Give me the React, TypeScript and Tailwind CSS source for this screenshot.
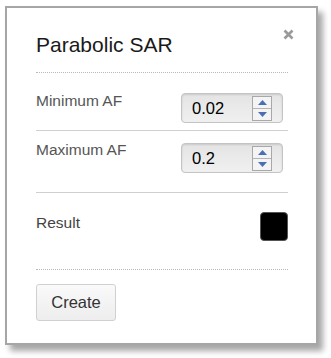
import React from "react";

function Spinner() {
  return (
    <div className="flex h-[25px] w-[20px] flex-col border border-[#a8a8a8] bg-[#f4f4f4]">
      <div className="flex flex-1 items-center justify-center border-b border-[#b5b5b5]">
        <svg width="9" height="5" viewBox="0 0 9 5">
          <path d="M0 5 L4.5 0 L9 5 Z" fill="#4a6fb5" />
        </svg>
      </div>
      <div className="flex flex-1 items-center justify-center">
        <svg width="9" height="5" viewBox="0 0 9 5">
          <path d="M0 0 L4.5 5 L9 0 Z" fill="#4a6fb5" />
        </svg>
      </div>
    </div>
  );
}

function NumberBox({ value }: { value: string }) {
  return (
    <div className="mr-[5px] flex h-[30px] w-[102px] items-center justify-between rounded-[4px] border border-[#c4c4c4] bg-gradient-to-b from-[#e4e4e4] to-[#f0f0f0] pl-[10px] pr-[10px] shadow-[inset_0_1px_2px_rgba(0,0,0,0.12)]">
      <span className="text-[16.5px] text-black">{value}</span>
      <Spinner />
    </div>
  );
}

export default function App() {
  return (
    <div className="h-[358px] w-[331px] bg-white font-['Liberation_Sans',Arial,sans-serif]">
      <div className="pl-[5px] pt-[6px]">
        <div className="relative h-[339px] w-[313px] border-2 border-[#a6a6a6] bg-white pl-[29px] pr-[28px] pt-[25px] shadow-[5px_6px_6px_rgba(0,0,0,0.35)]">
          <button
            type="button"
            className="absolute right-[22px] top-[20px] flex h-[12px] w-[12px] items-center justify-center"
          >
            <svg width="11" height="11" viewBox="0 0 11 11">
              <path d="M1.5 1.5 L9.5 9.5 M9.5 1.5 L1.5 9.5" stroke="#9a9a9a" strokeWidth="2.6" />
            </svg>
          </button>

          <h1 className="text-[21px] leading-[24px] text-[#1a1a1a]">Parabolic SAR</h1>

          <div className="mt-[15px] border-b border-dotted border-[#b8b8b8]" />

          <div className="flex h-[57px] items-start justify-between">
            <span className="mt-[18px] text-[15.5px] leading-[20px] text-[#555]">Minimum AF</span>
            <div className="mt-[20px]">
              <NumberBox value="0.02" />
            </div>
          </div>

          <div className="border-b border-[#cfcfcf]" />

          <div className="flex h-[61px] items-start justify-between">
            <span className="mt-[9px] text-[15.5px] leading-[20px] text-[#555]">Maximum AF</span>
            <div className="mt-[12px]">
              <NumberBox value="0.2" />
            </div>
          </div>

          <div className="border-b border-[#cfcfcf]" />

          <div className="flex h-[76px] items-start justify-between">
            <span className="mt-[20px] text-[15.5px] leading-[20px] text-[#444]">Result</span>
            <div className="mt-[19px] h-[29px] w-[28px] rounded-[4px] border border-[#555] bg-black" />
          </div>

          <div className="border-b border-dotted border-[#b8b8b8]" />

          <button
            type="button"
            className="mt-[14px] h-[37px] w-[80px] rounded-[3px] border border-[#d0d0d0] bg-gradient-to-b from-[#fafafa] to-[#ededed] text-[16.5px] text-[#333]"
          >
            Create
          </button>
        </div>
      </div>
    </div>
  );
}
